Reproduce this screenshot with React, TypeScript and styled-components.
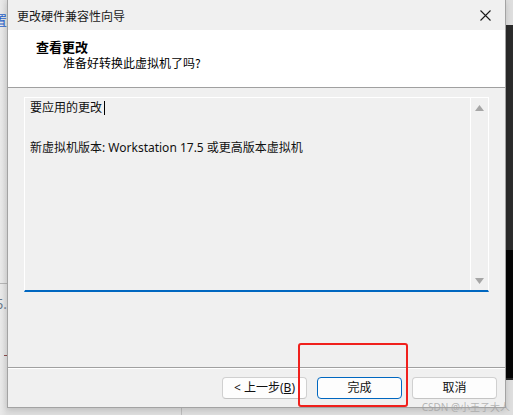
import React from "react";
import styled, { createGlobalStyle } from "styled-components";

const GlobalStyle = createGlobalStyle`
  html, body { margin: 0; padding: 0; }
  body {
    background: #dcdcdc;
    font-family: "Segoe UI", "Noto Sans", "Noto Sans CJK SC", sans-serif;
    color: #111;
  }
`;

const Desktop = styled.div`
  position: relative;
  width: 513px;
  height: 415px;
  overflow: hidden;
  background: linear-gradient(90deg, #e9e9e9 0px, #dedede 7px);
`;

const BackStrip = styled.div<{ $top: number; $left: number; $w: number; $h: number; $bg: string }>`
  position: absolute;
  top: ${(p) => p.$top}px;
  left: ${(p) => p.$left}px;
  width: ${(p) => p.$w}px;
  height: ${(p) => p.$h}px;
  background: ${(p) => p.$bg};
`;

const BackText = styled.span<{ $top: number; $left: number; $color: string }>`
  position: absolute;
  top: ${(p) => p.$top}px;
  left: ${(p) => p.$left}px;
  font-size: 13px;
  line-height: 14px;
  color: ${(p) => p.$color};
  font-family: "Noto Sans CJK SC", "Noto Sans", sans-serif;
`;

const Window = styled.div`
  position: absolute;
  top: 0;
  left: 7px;
  width: 497px;
  height: 407px;
  border: 1px solid #a3a3a3;
  border-top: none;
  background: #f0f0f0;
  display: flex;
  flex-direction: column;
  box-shadow: 0 2px 6px rgba(0, 0, 0, 0.15);
`;

const TitleBar = styled.div`
  height: 30px;
  flex: none;
  display: flex;
  align-items: center;
  justify-content: space-between;
  padding: 0 9px 0 9px;
  background: #f0f0f0;
  font-family: "Noto Sans CJK SC", sans-serif;
  font-size: 12px;
  color: #1a1a1a;
`;

const CloseButton = styled.div`
  width: 20px;
  height: 20px;
  display: flex;
  align-items: center;
  justify-content: center;
  margin-right: 1px;
`;

const Header = styled.div`
  height: 57px;
  flex: none;
  background: #ffffff;
  border-bottom: 1px solid #a0a0a0;
  padding: 9px 0 0 28px;
  box-sizing: border-box;
  height: 58px;
  font-family: "Noto Sans CJK SC", sans-serif;
`;

const HeaderTitle = styled.div`
  font-size: 13px;
  font-weight: 700;
  line-height: 16px;
  color: #000;
`;

const HeaderSub = styled.div`
  font-size: 12px;
  line-height: 16px;
  padding-left: 27px;
  color: #000;
`;

const Body = styled.div`
  flex: 1;
  padding: 9px 16px 0 16px;
  border-bottom: 1px solid #a0a0a0;
  box-shadow: 0 1px 0 #ffffff;
`;

const ChangesBox = styled.div`
  height: 192px;
  border: 1px solid #ffffff;
  border-bottom: 2px solid #0067c0;
  display: flex;
  background: #f0f0f0;
`;

const ChangesText = styled.div`
  flex: 1;
  padding: 0 0 0 5px;
  font-size: 12px;
  line-height: 20px;
  color: #111;
`;

const Line = styled.div<{ $gap?: number }>`
  margin-top: ${(p) => p.$gap ?? 0}px;
  display: flex;
  align-items: center;
`;

const Caret = styled.span`
  display: inline-block;
  width: 1px;
  height: 14px;
  background: #000;
  margin-left: 2px;
`;

const Scrollbar = styled.div`
  width: 17px;
  border-left: 1px solid #ffffff;
  display: flex;
  flex-direction: column;
  justify-content: space-between;
  align-items: center;
  padding: 7px 0 6px;
`;

const Footer = styled.div`
  height: 38px;
  flex: none;
  margin-top: 1px;
  display: flex;
  justify-content: flex-end;
  align-items: flex-start;
  gap: 10px;
  padding: 8px 8px 0 0;
  box-sizing: border-box;
`;

const Button = styled.button<{ $primary?: boolean }>`
  width: 85px;
  height: 22px;
  border-radius: 4px;
  border: 1px solid ${(p) => (p.$primary ? "#0067c0" : "#d0d0d0")};
  border-bottom-color: ${(p) => (p.$primary ? "#0067c0" : "#c4c4c4")};
  background: #fdfdfd;
  font-family: "Segoe UI", "Noto Sans", "Noto Sans CJK SC", sans-serif;
  font-size: 12px;
  line-height: 16px;
  color: #111;
  padding: 0;
  display: flex;
  align-items: center;
  justify-content: center;
`;

const Mnemonic = styled.span`
  text-decoration: underline;
`;

const Highlight = styled.div`
  position: absolute;
  left: 298px;
  top: 343px;
  width: 110px;
  height: 64px;
  box-sizing: border-box;
  border: 2px solid #f0201c;
  border-radius: 3px;
  pointer-events: none;
`;

const Watermark = styled.div`
  position: absolute;
  right: 3px;
  bottom: 2px;
  font-family: "Noto Sans", "Noto Sans CJK SC", sans-serif;
  font-size: 10px;
  line-height: 12px;
  color: rgba(160, 160, 160, 0.75);
  pointer-events: none;
`;

const Tri = ({ up }: { up: boolean }) => (
  <svg width="9" height="6" viewBox="0 0 9 6">
    <path d={up ? "M0 6 L4.5 0 L9 6 Z" : "M0 0 L9 0 L4.5 6 Z"} fill="#a6a6a6" />
  </svg>
);

export default function App() {
  return (
    <>
      <GlobalStyle />
      <Desktop>
        <BackStrip $top={0} $left={180} $w={1} $h={2} $bg="#c8c8c8" />
        <BackStrip $top={25} $left={505} $w={8} $h={355} $bg="#2b2b2b" />
        <BackStrip $top={250} $left={505} $w={8} $h={128} $bg="#050505" />
        <BackStrip $top={283} $left={0} $w={7} $h={1} $bg="#b4b4b4" />
        <BackStrip $top={355} $left={4} $w={3} $h={1} $bg="#8a4a4a" />
        <BackStrip $top={408} $left={181} $w={1} $h={7} $bg="#bdbdbd" />
        <BackText $top={13} $left={-6} $color="#2a62c9">置</BackText>
        <BackText $top={297} $left={-4} $color="#6a7a8a">5.</BackText>

        <Window>
          <TitleBar>
            <span>更改硬件兼容性向导</span>
            <CloseButton>
              <svg width="11" height="11" viewBox="0 0 11 11">
                <path d="M0.5 0.5 L10.5 10.5 M10.5 0.5 L0.5 10.5" stroke="#1a1a1a" strokeWidth="1.1" />
              </svg>
            </CloseButton>
          </TitleBar>
          <Header>
            <HeaderTitle>查看更改</HeaderTitle>
            <HeaderSub>准备好转换此虚拟机了吗?</HeaderSub>
          </Header>
          <Body>
            <ChangesBox>
              <ChangesText>
                <Line>
                  要应用的更改
                  <Caret />
                </Line>
                <Line $gap={20}>新虚拟机版本: Workstation 17.5 或更高版本虚拟机</Line>
              </ChangesText>
              <Scrollbar>
                <Tri up />
                <Tri up={false} />
              </Scrollbar>
            </ChangesBox>
          </Body>
          <Footer>
            <Button>
              &lt; 上一步(<Mnemonic>B</Mnemonic>)
            </Button>
            <Button $primary>完成</Button>
            <Button>取消</Button>
          </Footer>
        </Window>

        <Highlight />
        <Watermark>CSDN @小王子大人</Watermark>
      </Desktop>
    </>
  );
}
